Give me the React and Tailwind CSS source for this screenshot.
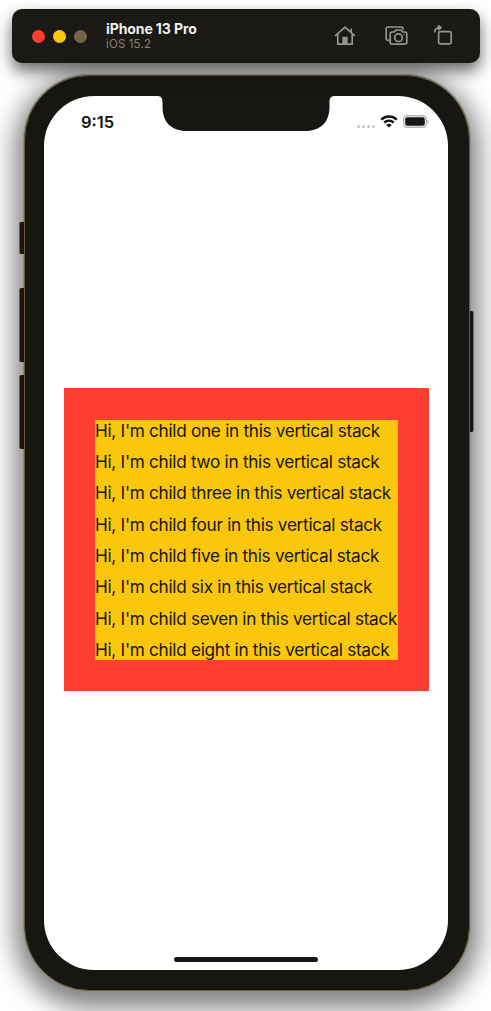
import React from 'react';

const words = ['one', 'two', 'three', 'four', 'five', 'six', 'seven', 'eight'];

function HomeIcon() {
  return (
    <svg width="22" height="22" viewBox="0 0 22 22" fill="none" stroke="#96948f" strokeWidth="1.7">
      <path d="M1.2 10.8 11 2.1l9.8 8.7M3.8 9v10.2h14.4V9M17.2 7V3.6" strokeLinejoin="round" />
      <path d="M9.2 19v-6.500h3.6V19z" fill="#96948f" />
    </svg>
  );
}

function ScreenshotIcon() {
  return (
    <svg width="24" height="22" viewBox="0 0 24 22" fill="none" stroke="#96948f" strokeWidth="1.7" strokeLinejoin="round">
      <path d="M4.5 15.3H3a1.8 1.8 0 0 1-1.800-1.800V3.8A1.8 1.8 0 0 1 3 2h13.2A1.8 1.8 0 0 1 18 3.8v1" />
      <path d="M7 7h2.500l1.400-2h5.200l1.400 2H20a1.8 1.8 0 0 1 1.800 1.800v8.600a1.8 1.8 0 0 1-1.800 1.800H7a1.8 1.8 0 0 1-1.800-1.800V8.800A1.8 1.8 0 0 1 7 7z" />
      <circle cx="13.500" cy="12.700" r="3.800" />
      <path d="M18.500 9.500h1" />
    </svg>
  );
}

function RotateIcon() {
  return (
    <svg width="20" height="22" viewBox="0 0 20 22" fill="none" stroke="#96948f" strokeWidth="1.7" strokeLinejoin="round">
      <rect x="5.600" y="6.600" width="12.600" height="12.200" rx="1.600" />
      <path d="M1.600 7.500c0-3 1.800-4.900 5-4.900" />
      <path d="M5.600.8 8 2.600 5.600 4.500z" fill="#96948f" />
    </svg>
  );
}

function Toolbar() {
  return (
    <header className="relative z-10 flex h-[54px] w-[468px] shrink-0 items-center rounded-[10px] bg-[#1b1915] pl-[20px] pr-[27px] shadow-[0_8px_16px_rgba(0,0,0,0.6)]">
      <div className="flex gap-2">
        <span className="size-[13px] rounded-full bg-[#ff3d31]" />
        <span className="size-[13px] rounded-full bg-[#fbc70d]" />
        <span className="size-[13px] rounded-full bg-[#716645]" />
      </div>
      <div className="ml-[19px] flex flex-col">
        <span className="text-[14px] font-bold leading-[15px] tracking-[-0.1px] text-[#f0f0ef]">iPhone 13 Pro</span>
        <span className="mt-px text-[11.500px] leading-[15px] tracking-[0.150px] text-[#8b8373]">iOS 15.2</span>
      </div>
      <div className="ml-auto flex items-center">
        <HomeIcon />
        <div className="ml-[29px] flex"><ScreenshotIcon /></div>
        <div className="ml-[24px] flex"><RotateIcon /></div>
      </div>
    </header>
  );
}

function StatusBar() {
  return (
    <div className="flex h-[51px] items-center justify-between pl-[37px] pr-[19px] text-[#171612]">
      <span className="text-[16.500px] font-semibold leading-5">9:15</span>
      <div className="flex items-center">
        <div className="mt-[9px] flex gap-[2px]">
          <span className="size-[3px] rounded-full bg-[#c6c6c6]" />
          <span className="size-[3px] rounded-full bg-[#c6c6c6]" />
          <span className="size-[3px] rounded-full bg-[#c6c6c6]" />
          <span className="size-[3px] rounded-full bg-[#c6c6c6]" />
        </div>
        <svg className="ml-[5px]" width="18" height="13" viewBox="0 0 18 13" fill="none" stroke="#171612" strokeWidth="2.500">
          <path d="M1.200 4.600c4.400-4.100 11.200-4.100 15.600 0M4.200 7.700c2.800-2.600 6.800-2.600 9.600 0" />
          <path d="M9 12.600 6.300 9.900c1.500-1.400 3.900-1.400 5.400 0z" fill="#171612" stroke="none" />
        </svg>
        <svg className="ml-[5px]" width="26" height="13" viewBox="0 0 26 13">
          <rect x="0.700" y="0.700" width="22.600" height="11.600" rx="3.500" fill="none" stroke="#b5b5b5" strokeWidth="1.400" />
          <rect x="2.200" y="2.200" width="19.600" height="8.600" rx="2" fill="#171612" />
          <path d="M24.400 4.200c1.500.8 1.500 3.800 0 4.600z" fill="#aaa" />
        </svg>
      </div>
    </div>
  );
}

function Phone() {
  return (
    <main className="relative mt-3 ml-[12px] h-[916px] w-[446px] rounded-[65px] border border-[#6e6033] bg-[#171612] px-[19px] py-[20px] shadow-[0_0_0_1px_#8b8b8b,0_8px_26px_9px_rgba(0,0,0,0.5)]">
      <span className="absolute left-[-6px] top-[146px] h-[32px] w-[5px] rounded-l-[2px] border-l border-[#6e6033] bg-[#171612]" />
      <span className="absolute left-[-6px] top-[212px] h-[74px] w-[5px] rounded-l-[2px] border-l border-[#6e6033] bg-[#171612]" />
      <span className="absolute left-[-6px] top-[299px] h-[74px] w-[5px] rounded-l-[2px] border-l border-[#6e6033] bg-[#171612]" />
      <span className="absolute right-[-5px] top-[235px] h-[121px] w-[4px] rounded-r-[2px] border-r border-[#77736a] bg-[#171612]" />
      <section className="relative flex h-[874px] w-[404px] flex-col overflow-hidden rounded-[50px] bg-white">
        <svg className="absolute left-[113px] top-0" width="178" height="36" viewBox="0 0 178 36" fill="#171612">
          <path d="M0 0h178c-4 0-5.500 2-5.500 6v5c0 15-9 24-24 24H29.500c-15 0-24-9-24-24V6c0-4-1.500-6-5.500-6z" />
        </svg>
        <StatusBar />
        <div className="ml-5 mt-[241px] h-[303px] w-[365px] bg-[#ff3d31] pl-[31px] pt-[31.500px]">
          <ul className="flex h-[240.500px] w-[303px] flex-col gap-[10.400px] whitespace-nowrap bg-[#fbc70d] text-[17.200px] leading-[21px] tracking-[-0.290px] text-[#171612]">
            {words.map((word) => (
              <li key={word}>{`Hi, I'm child ${word} in this vertical stack`}</li>
            ))}
          </ul>
        </div>
        <div className="mx-auto mb-[8px] mt-auto h-[5px] w-[144px] rounded-full bg-[#171612]" />
      </section>
    </main>
  );
}

export default function App() {
  return (
    <div className="h-[1011px] w-[491px] overflow-hidden bg-white pl-[12px] pt-[9px] font-['Inter','Liberation_Sans',sans-serif]">
      <Toolbar />
      <Phone />
    </div>
  );
}
